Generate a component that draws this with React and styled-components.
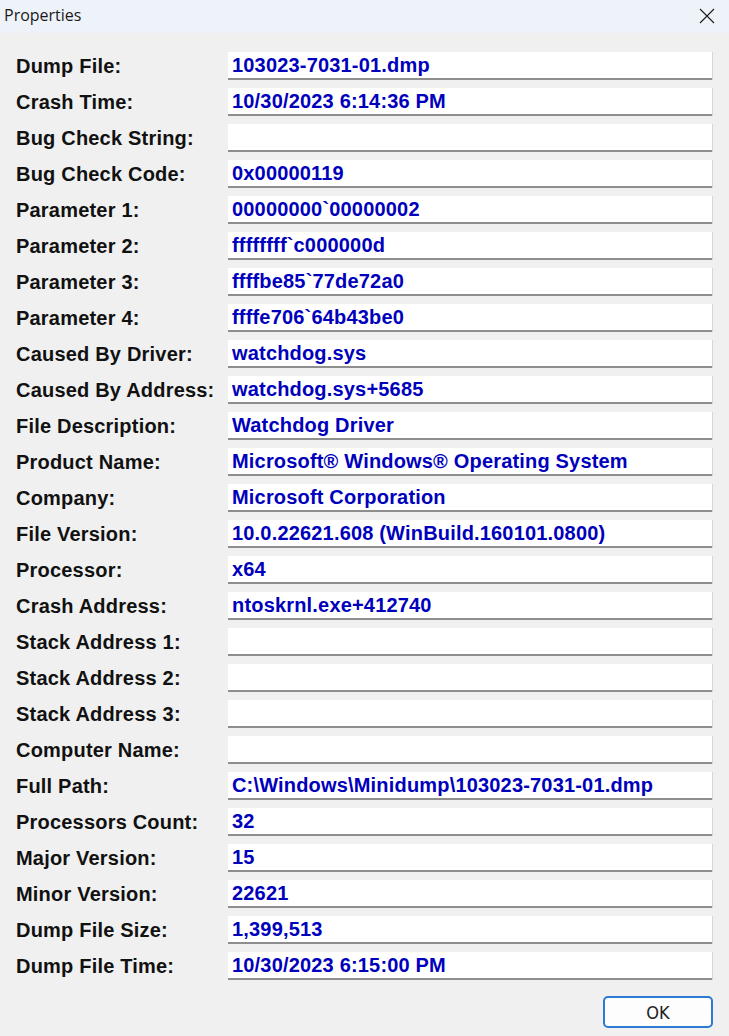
import React from "react";
import styled, { createGlobalStyle } from "styled-components";

const Global = createGlobalStyle`
  html, body { margin: 0; padding: 0; }
  body { background: #f0f0f0; width: 729px; height: 1036px; overflow: hidden; }
  #root { width: 729px; height: 1036px; }
`;

const Window = styled.div`
  width: 729px;
  height: 1036px;
  background: #f0f0f0;
  display: flex;
  flex-direction: column;
  box-sizing: border-box;
`;

const TitleBar = styled.div`
  height: 33px;
  flex: none;
  background: #eef3f9;
  display: flex;
  align-items: center;
  justify-content: space-between;
  padding: 0 14px 0 4px;
`;

const Title = styled.span`
  font-family: "Open Sans", "Noto Sans", sans-serif;
  font-size: 16px;
  color: #1a1a1a;
  margin-top: -4px;
`;

const CloseBtn = styled.div`
  width: 17px;
  height: 17px;
  display: flex;
  align-items: center;
  justify-content: center;
  margin-top: -2px;
`;

const Body = styled.div`
  display: flex;
  flex-direction: column;
  gap: 8px;
  padding: 19px 17px 0 16px;
`;

const Row = styled.div`
  display: flex;
  align-items: flex-start;
  height: 28px;
`;

const Label = styled.div`
  width: 212px;
  flex: none;
  font-family: "Liberation Sans", Arial, sans-serif;
  font-weight: bold;
  font-size: 20px;
  letter-spacing: 0.2px;
  line-height: 28px;
  color: #111;
  white-space: nowrap;
`;

const Field = styled.div`
  flex: 1;
  height: 26px;
  background: #ffffff;
  border-bottom: 2px solid #8e8e8e;
  box-shadow: 1px 0 0 #d6d6d6;
  padding-left: 4px;
  font-family: "Liberation Sans", Arial, sans-serif;
  font-weight: bold;
  font-size: 20px;
  letter-spacing: 0.18px;
  line-height: 26px;
  color: #0000bc;
  white-space: nowrap;
  overflow: hidden;
`;

const Footer = styled.div`
  display: flex;
  justify-content: flex-end;
  padding: 16px 16px 0 0;
`;

const OkButton = styled.button`
  width: 110px;
  height: 32px;
  box-sizing: border-box;
  background: #fdfdfd;
  border: 2px solid #2a7ad6;
  border-radius: 5px;
  font-family: "DejaVu Sans Condensed", "Liberation Sans", sans-serif;
  font-size: 18px;
  font-weight: 300;
  color: #222;
  padding: 0;
  cursor: default;
`;

const rows = [
  ["Dump File:", "103023-7031-01.dmp"],
  ["Crash Time:", "10/30/2023 6:14:36 PM"],
  ["Bug Check String:", ""],
  ["Bug Check Code:", "0x00000119"],
  ["Parameter 1:", "00000000`00000002"],
  ["Parameter 2:", "ffffffff`c000000d"],
  ["Parameter 3:", "ffffbe85`77de72a0"],
  ["Parameter 4:", "ffffe706`64b43be0"],
  ["Caused By Driver:", "watchdog.sys"],
  ["Caused By Address:", "watchdog.sys+5685"],
  ["File Description:", "Watchdog Driver"],
  ["Product Name:", "Microsoft® Windows® Operating System"],
  ["Company:", "Microsoft Corporation"],
  ["File Version:", "10.0.22621.608 (WinBuild.160101.0800)"],
  ["Processor:", "x64"],
  ["Crash Address:", "ntoskrnl.exe+412740"],
  ["Stack Address 1:", ""],
  ["Stack Address 2:", ""],
  ["Stack Address 3:", ""],
  ["Computer Name:", ""],
  ["Full Path:", "C:\\Windows\\Minidump\\103023-7031-01.dmp"],
  ["Processors Count:", "32"],
  ["Major Version:", "15"],
  ["Minor Version:", "22621"],
  ["Dump File Size:", "1,399,513"],
  ["Dump File Time:", "10/30/2023 6:15:00 PM"],
];

export default function App() {
  return (
    <>
      <Global />
      <Window>
        <TitleBar>
          <Title>Properties</Title>
          <CloseBtn>
            <svg width="16" height="16" viewBox="0 0 16 16">
              <path d="M1 1 L15 15 M15 1 L1 15" stroke="#1a1a1a" strokeWidth="1.1" fill="none" />
            </svg>
          </CloseBtn>
        </TitleBar>
        <Body>
          {rows.map(([label, value]) => (
            <Row key={label}>
              <Label>{label}</Label>
              <Field>{value}</Field>
            </Row>
          ))}
        </Body>
        <Footer>
          <OkButton>OK</OkButton>
        </Footer>
      </Window>
    </>
  );
}
